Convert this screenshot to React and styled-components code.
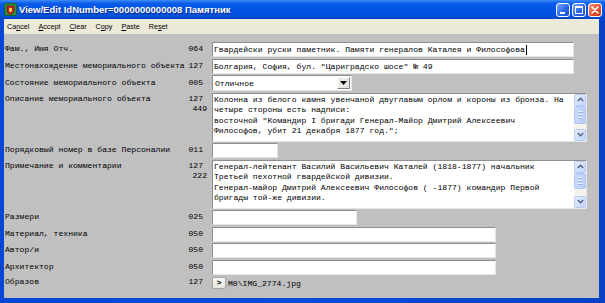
import styled, { createGlobalStyle } from "styled-components";

const GlobalStyle = createGlobalStyle`
  html, body {
    margin: 0;
    padding: 0;
    overflow: hidden;
  }
  body {
    width: 605px;
    height: 303px;
    background: #0a4cdb;
  }
`;

const MONO = `"Liberation Mono", "DejaVu Sans Mono", monospace`;
const SANS = `"Liberation Sans", Arial, sans-serif`;

const rows = [
  { label: "Фам., Имя Отч.", count: "064", kind: "input", width: 362, value: "Гвардейски руски паметник. Памяти генералов Каталея и Философова", caret: true },
  { label: "Местонахождение мемориального объекта", count: "127", kind: "input", width: 362, value: "Болгария, София, бул. \"Цариградско шосе\" № 49" },
  { label: "Состояние мемориального объекта", count: "005", kind: "select", width: 140, value: "Отличное" },
  {
    label: "Описание мемориального объекта",
    count: "127",
    extra: "449",
    kind: "memo",
    thumb: 18,
    lines: [
      "Колонна из белого камня увенчаной двуглавым орлом и короны из бронза. На",
      "четыре стороны есть надписи:",
      "восточной \"Командир I бригади Генерал-Майор Дмитрий Алексеевич",
      "Философов, убит 21 декабря 1877 год.\";",
    ],
  },
  { label: "Порядковый номер в базе Персоналии", count: "011", kind: "input", width: 66, value: "" },
  {
    label: "Примечание и комментарии",
    count: "127",
    extra: "222",
    kind: "memo",
    thumb: 16,
    lines: [
      "Генерал-лейтенант Василий Васильевич Каталей (1818-1877) начальник",
      "Третьей пехотной гвардейской дивизии.",
      "Генерал-майор Дмитрий Алексеевич Философов ( -1877) командир Первой",
      "бригады той-же дивизии.",
    ],
  },
  { label: "Размери", count: "025", kind: "input", width: 145, value: "" },
  { label: "Материал, техника", count: "050", kind: "input", width: 284, value: "" },
  { label: "Автор/и", count: "050", kind: "input", width: 284, value: "" },
  { label: "Архитектор", count: "050", kind: "input", width: 284, value: "" },
  { label: "Образов", count: "127", kind: "file", value: "M0\\IMG_2774.jpg" },
];

const menu = [
  ["Ca", "n", "cel"],
  ["", "A", "ccept"],
  ["", "C", "lear"],
  ["C", "o", "py"],
  ["", "P", "aste"],
  ["Re", "s", "et"],
];

export default function App() {
  return (
    <>
      <GlobalStyle />
      <Window>
        <TitleBar>
          <AppIcon viewBox="0 0 13 13">
            <rect x="0.5" y="0.5" width="12" height="12" rx="2" fill="#2f8f3a" stroke="#1c5e24" />
            <path d="M3 3 H10 V7 Q10 10 6.5 11.5 Q3 10 3 7 Z" fill="#c8202a" stroke="#6a0c10" strokeWidth="0.6" />
            <path d="M5 5 H8 V7 Q8 8.6 6.5 9.4 Q5 8.6 5 7 Z" fill="#f2d04a" />
          </AppIcon>
          <Title>View/Edit IdNumber=0000000000008 Памятник</Title>
          <Controls>
            <CtlButton>
              <svg width="12" height="12" viewBox="0 0 12 12">
                <rect x="3" y="8" width="5" height="2" fill="#fff" />
              </svg>
            </CtlButton>
            <CtlButton>
              <svg width="12" height="12" viewBox="0 0 12 12">
                <rect x="2.5" y="2.5" width="7" height="7" fill="none" stroke="#fff" strokeWidth="1" />
                <rect x="2.5" y="2.5" width="7" height="1.5" fill="#fff" />
              </svg>
            </CtlButton>
            <CtlButton $close>
              <svg width="12" height="12" viewBox="0 0 12 12">
                <path d="M3 3 L9 9 M9 3 L3 9" stroke="#fff" strokeWidth="1.6" strokeLinecap="round" />
              </svg>
            </CtlButton>
          </Controls>
        </TitleBar>
        <Frame>
          <MenuBar>
            {menu.map(([a, u, b]) => (
              <MenuItem key={a + u + b}>
                {a}
                <u>{u}</u>
                {b}
              </MenuItem>
            ))}
          </MenuBar>
          <Body>
            {rows.map((r) => (
              <Row key={r.label} $top={r.kind === "memo"}>
                <Label $top={r.kind === "memo"}>{r.label}</Label>
                <Counts $top={r.kind === "memo"}>
                  <Count>{r.count}</Count>
                  {r.extra && <Count $shift>{r.extra}</Count>}
                </Counts>
                {r.kind === "input" && (
                  <TextInput $width={r.width}>
                    {r.value}
                    {r.caret && <Caret />}
                  </TextInput>
                )}
                {r.kind === "select" && (
                  <Select $width={r.width}>
                    <SelectText>{r.value}</SelectText>
                    <DropButton>
                      <svg width="7" height="4" viewBox="0 0 7 4">
                        <path d="M0 0 H7 L3.5 4 Z" fill="#000" />
                      </svg>
                    </DropButton>
                  </Select>
                )}
                {r.kind === "memo" && (
                  <Memo>
                    <MemoText>{r.lines.join("\n")}</MemoText>
                    <ScrollBar>
                      <ScrollButton>
                        <svg width="7" height="5" viewBox="0 0 7 5">
                          <path d="M0.8 4 L3.5 1.2 L6.2 4" fill="none" stroke="#4d6185" strokeWidth="1.4" />
                        </svg>
                      </ScrollButton>
                      <Track>
                        <Thumb style={{ height: r.thumb }}>
                          <Grip />
                          <Grip />
                          <Grip />
                        </Thumb>
                      </Track>
                      <ScrollButton>
                        <svg width="7" height="5" viewBox="0 0 7 5">
                          <path d="M0.8 1 L3.5 3.8 L6.2 1" fill="none" stroke="#4d6185" strokeWidth="1.4" />
                        </svg>
                      </ScrollButton>
                    </ScrollBar>
                  </Memo>
                )}
                {r.kind === "file" && (
                  <FileRow>
                    <PickButton>&gt;</PickButton>
                    <FileName>{r.value}</FileName>
                  </FileRow>
                )}
              </Row>
            ))}
          </Body>
        </Frame>
      </Window>
    </>
  );
}

//Styled
const Window = styled.div`
  width: 605px;
  height: 303px;
  display: flex;
  flex-direction: column;
  background: linear-gradient(90deg, #0846d4, #0a4cdb 50%, #0841c8);
`;

const TitleBar = styled.div`
  height: 19px;
  flex: none;
  display: flex;
  align-items: center;
  padding: 0 3px 0 4px;
  background: linear-gradient(#3d8af7 0%, #0b5ce9 18%, #0055e5 50%, #0050dc 82%, #0042c6 100%);
`;

const AppIcon = styled.svg`
  width: 13px;
  height: 13px;
  flex: none;
`;

const Title = styled.div`
  margin-left: 2px;
  color: #fff;
  font-family: ${SANS};
  font-weight: bold;
  font-size: 9.5px;
  white-space: nowrap;
  text-shadow: 1px 1px 0 #0b2a8f;
`;

const Controls = styled.div`
  margin-left: auto;
  display: flex;
  gap: 2px;
  margin-top: 1px;
`;

const CtlButton = styled.div`
  width: 14px;
  height: 14px;
  box-sizing: border-box;
  border: 1px solid #fff;
  border-radius: 3px;
  display: flex;
  align-items: center;
  justify-content: center;
  background: ${(p) =>
    p.$close
      ? "linear-gradient(135deg, #f29a7c, #e0502c 55%, #c93a1a)"
      : "linear-gradient(135deg, #79a6fb, #2b67e8 55%, #1d4fd0)"};
`;

const Frame = styled.div`
  flex: 1;
  display: flex;
  flex-direction: column;
  margin: 0 6px 5px 4px;
  background: #c0c0c0;
`;

const MenuBar = styled.div`
  height: 15px;
  flex: none;
  display: flex;
  align-items: center;
  gap: 9px;
  padding-left: 3px;
  background: #ece9d8;
  font-family: ${SANS};
  font-size: 7.2px;
  color: #000;
`;

const MenuItem = styled.span`
  white-space: nowrap;
  u {
    text-underline-offset: 1px;
  }
`;

const Body = styled.div`
  flex: 1;
  display: flex;
  flex-direction: column;
  gap: 1.5px;
  padding: 8px 0 0 1px;
  font-family: ${MONO};
  font-size: 8.1px;
  color: #000;
`;

const Row = styled.div`
  display: grid;
  grid-template-columns: 182px 25px auto;
  align-items: ${(p) => (p.$top ? "start" : "center")};
`;

const Label = styled.div`
  white-space: nowrap;
  line-height: 10.5px;
  padding-top: ${(p) => (p.$top ? "1px" : "0")};
`;

const Counts = styled.div`
  display: flex;
  flex-direction: column;
  align-items: flex-end;
  line-height: 10.5px;
  padding-top: ${(p) => (p.$top ? "1px" : "0")};
`;

const Count = styled.div`
  padding-right: ${(p) => (p.$shift ? "5px" : "9px")};
`;

const fieldBorder = `
  box-sizing: border-box;
  border: 1px solid;
  border-color: #8e8e8e #e6e6e6 #e6e6e6 #8e8e8e;
  background: #fff;
`;

const TextInput = styled.div`
  ${fieldBorder}
  width: ${(p) => p.$width}px;
  height: 15px;
  padding: 0 1px;
  line-height: 13px;
  white-space: nowrap;
  overflow: hidden;
  display: flex;
  align-items: center;
`;

const Caret = styled.span`
  width: 1px;
  height: 10px;
  background: #000;
  margin-left: 1px;
`;

const Select = styled.div`
  ${fieldBorder}
  width: ${(p) => p.$width}px;
  height: 16px;
  display: flex;
  align-items: center;
  padding: 1px;
`;

const SelectText = styled.div`
  flex: 1;
  padding-left: 1px;
  white-space: nowrap;
`;

const DropButton = styled.div`
  width: 13px;
  height: 12px;
  box-sizing: border-box;
  border: 1px solid;
  border-color: #fff #808080 #808080 #fff;
  background: #e8e8e4;
  display: flex;
  align-items: center;
  justify-content: center;
`;

const Memo = styled.div`
  ${fieldBorder}
  width: 375px;
  height: 49px;
  display: flex;
`;

const MemoText = styled.div`
  flex: 1;
  padding: 1px 1px;
  line-height: 10.5px;
  white-space: pre;
  overflow: hidden;
`;

const ScrollBar = styled.div`
  width: 12px;
  flex: none;
  display: flex;
  flex-direction: column;
  background: #f4f3ee;
`;

const ScrollButton = styled.div`
  height: 12px;
  flex: none;
  box-sizing: border-box;
  border: 1px solid #bccdf4;
  border-radius: 2px;
  background: linear-gradient(135deg, #e4ecfe, #c2d3fb);
  display: flex;
  align-items: center;
  justify-content: center;
`;

const Track = styled.div`
  flex: 1;
  display: flex;
  flex-direction: column;
`;

const Thumb = styled.div`
  box-sizing: border-box;
  border: 1px solid #b3c6f3;
  border-radius: 2px;
  background: linear-gradient(90deg, #c9d8fc, #bccffa);
  display: flex;
  flex-direction: column;
  align-items: center;
  justify-content: center;
  gap: 1px;
`;

const Grip = styled.div`
  width: 5px;
  height: 1px;
  background: #e8effe;
  border-bottom: 1px solid #9fb6ea;
`;

const FileRow = styled.div`
  display: flex;
  align-items: center;
  gap: 2px;
  margin-top: 1px;
`;

const PickButton = styled.div`
  width: 14px;
  height: 12px;
  box-sizing: border-box;
  border: 1px solid #a6a6a0;
  border-radius: 2px;
  background: linear-gradient(#fbfbf8, #e7e5dc);
  font-family: ${SANS};
  font-weight: bold;
  font-size: 8px;
  line-height: 10px;
  text-align: center;
`;

const FileName = styled.div`
  white-space: nowrap;
`;
